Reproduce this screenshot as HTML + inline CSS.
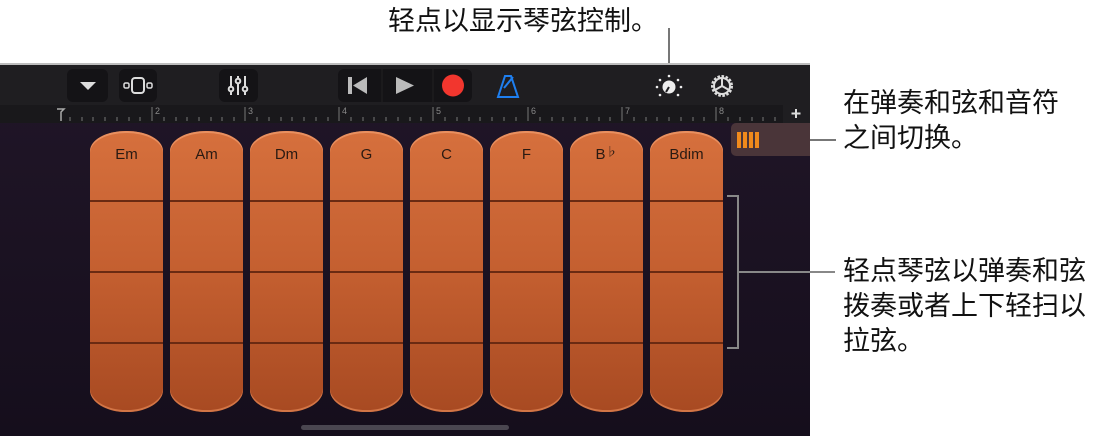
<!DOCTYPE html>
<html><head><meta charset="utf-8"><style>
*{margin:0;padding:0;box-sizing:border-box}
body{width:1107px;height:436px;background:#fff;position:relative;overflow:hidden;font-family:"Liberation Sans","Noto Sans CJK SC",sans-serif}
.cap{position:absolute;font-size:27px;color:#111;line-height:35px;white-space:nowrap;font-family:"Liberation Sans","Noto Sans CJK SC",sans-serif}
.ln{position:absolute;background:#777}
#scr{position:absolute;left:0;top:63px;width:810px;height:373px;background:linear-gradient(#211628,#150e1c);overflow:hidden}
#bar{position:absolute;left:0;top:0;width:810px;height:42px;background:#1f1e21;border-top:2px solid #bdbdbd}
.btn{position:absolute;top:4px;height:33px;background:#141316;border-radius:6px}
#ruler{position:absolute;left:0;top:42px;width:810px;height:18px;background:#19181b}
.col{position:absolute;top:68px;width:73px;height:281px;border-radius:36px 36px 36px 36px/20px 20px 22px 22px;background:linear-gradient(#d6703d,#c45f30 50%,#a84a22);box-shadow:inset 0 2px 0 #e99060,inset 0 -2px 0 #d27546;overflow:hidden}
.col span{position:absolute;top:15px;width:100%;text-align:center;font-size:15px;color:#2a1a12}
.col i{position:absolute;left:0;width:100%;height:2px;background:#6a2a12}
</style></head><body>
<div class="cap" style="left:388px;top:4px">轻点以显示琴弦控制。</div>
<div class="ln" style="left:668px;top:28px;width:2px;height:46px"></div>
<div class="cap" style="left:843px;top:86px">在弹奏和弦和音符<br>之间切换。</div>
<div class="ln" style="left:810px;top:139px;width:26px;height:2px"></div>
<div class="cap" style="left:843px;top:254px">轻点琴弦以弹奏和弦<br>拨奏或者上下轻扫以<br>拉弦。</div>
<div id="scr">
 <div id="bar">
  <div class="btn" style="left:67px;width:41px"><div style="position:absolute;left:13px;top:13px;border-left:8px solid transparent;border-right:8px solid transparent;border-top:8px solid #ddd"></div></div>
  <div class="btn" style="left:119px;width:38px"><svg width="38" height="33"><rect x="13" y="9" width="12" height="15" rx="3" fill="none" stroke="#ddd" stroke-width="2"/><rect x="5" y="14" width="5" height="5" rx="1.5" fill="none" stroke="#ddd" stroke-width="1.5"/><rect x="28" y="14" width="5" height="5" rx="1.5" fill="none" stroke="#ddd" stroke-width="1.5"/></svg></div>
  <div class="btn" style="left:219px;width:39px"><svg width="39" height="33" stroke="#ddd" stroke-width="2" fill="none"><path d="M12 7v19M19 7v19M26 7v19"/><circle cx="12" cy="20" r="2.3" fill="#141316"/><circle cx="19" cy="12" r="2.3" fill="#141316"/><circle cx="26" cy="20" r="2.3" fill="#141316"/></svg></div>
  <div class="btn" style="left:338px;width:134px"><svg width="134" height="33"><rect x="10" y="8" width="4" height="17" fill="#bbb"/><path d="M29 8v17L15 16.5z" fill="#bbb"/><path d="M58 8v17l18-8.5z" fill="#bbb"/><circle cx="115" cy="16.5" r="11" fill="#f2362e"/><path d="M44 0v33M95 0v33" stroke="#222" stroke-width="1"/></svg></div>
  <svg style="position:absolute;left:494px;top:6px" width="28" height="30" fill="none" stroke="#1e7ff0" stroke-width="2"><path d="M4 26h20L17 5h-6z"/><path d="M10 17l9-11"/></svg>
  <svg style="position:absolute;left:654px;top:7px" width="30" height="28"><circle cx="15" cy="15" r="6.5" fill="#eee"/><path d="M15 15l-3 5" stroke="#1f1e21" stroke-width="2"/><g fill="#eee"><circle cx="15" cy="4" r="1.3"/><circle cx="6" cy="8" r="1.3"/><circle cx="24" cy="8" r="1.3"/><circle cx="3" cy="15" r="1.3"/><circle cx="27" cy="15" r="1.3"/><circle cx="6" cy="23" r="1.3"/><circle cx="24" cy="23" r="1.3"/></g></svg>
  <svg style="position:absolute;left:707px;top:6px" width="30" height="30" fill="none" stroke="#ddd" stroke-width="2"><circle cx="15" cy="15" r="9.5" stroke-dasharray="2.5 1.5" stroke-width="3"/><circle cx="15" cy="15" r="8"/><path d="M15 15V7M15 15l-7 4M15 15l7 4"/></svg>
 </div>
 <div id="ruler"><svg width="810" height="18">
  <path d="M57 4h7l-3 3v9" stroke="#aaa" stroke-width="1.5" fill="none"/>
  <g stroke="#777" stroke-width="1">
  <path d="M70 12v4M82 12v4M93 12v4M105 12v4M117 12v4M129 12v4M140 12v4"/>
  <path d="M152 2v14M245 2v14M339 2v14M433 2v14M528 2v14M622 2v14M716 2v14"/>
  <path d="M164 12v4M176 12v4M187 12v4M199 12v4M211 12v4M222 12v4M234 12v4M257 12v4M269 12v4M281 12v4M292 12v4M304 12v4M316 12v4M328 12v4M351 12v4M363 12v4M374 12v4M386 12v4M398 12v4M410 12v4M421 12v4M445 12v4M457 12v4M469 12v4M480 12v4M492 12v4M504 12v4M516 12v4M540 12v4M552 12v4M563 12v4M575 12v4M587 12v4M599 12v4M610 12v4M634 12v4M646 12v4M657 12v4M669 12v4M681 12v4M693 12v4M704 12v4M728 12v4M740 12v4M752 12v4M763 12v4M775 12v4"/></g>
  <g fill="#888" font-size="9" font-family="Liberation Sans"><text x="155" y="9">2</text><text x="248" y="9">3</text><text x="342" y="9">4</text><text x="436" y="9">5</text><text x="531" y="9">6</text><text x="625" y="9">7</text><text x="719" y="9">8</text></g>
  <rect x="783" y="0" width="27" height="18" fill="#1f1e21"/>
  <path d="M796 4v9M791.5 8.5h9" stroke="#ddd" stroke-width="2"/>
 </svg></div>
 <div style="position:absolute;left:731px;top:60px;width:85px;height:33px;background:#4a3539;border-radius:5px"><svg width="40" height="33"><g fill="#f08a1c"><rect x="6" y="9" width="4" height="16"/><rect x="12" y="9" width="4" height="16"/><rect x="18" y="9" width="4" height="16"/><rect x="24" y="9" width="4" height="16"/></g></svg></div>
 <div class="col" style="left:90px"><span>Em</span><i style="top:69px"></i><i style="top:140px"></i><i style="top:211px"></i></div>
 <div class="col" style="left:170px"><span>Am</span><i style="top:69px"></i><i style="top:140px"></i><i style="top:211px"></i></div>
 <div class="col" style="left:250px"><span>Dm</span><i style="top:69px"></i><i style="top:140px"></i><i style="top:211px"></i></div>
 <div class="col" style="left:330px"><span>G</span><i style="top:69px"></i><i style="top:140px"></i><i style="top:211px"></i></div>
 <div class="col" style="left:410px"><span>C</span><i style="top:69px"></i><i style="top:140px"></i><i style="top:211px"></i></div>
 <div class="col" style="left:490px"><span>F</span><i style="top:69px"></i><i style="top:140px"></i><i style="top:211px"></i></div>
 <div class="col" style="left:570px"><span>B<small style="font-size:12px;position:relative;top:-3px">♭</small></span><i style="top:69px"></i><i style="top:140px"></i><i style="top:211px"></i></div>
 <div class="col" style="left:650px"><span>Bdim</span><i style="top:69px"></i><i style="top:140px"></i><i style="top:211px"></i></div>
 <div style="position:absolute;left:301px;top:362px;width:208px;height:5px;border-radius:3px;background:#4a4650"></div>
 <div style="position:absolute;left:727px;top:132px;width:12px;height:154px;border:2px solid #888;border-left:none"></div>
</div>
<div class="ln" style="left:739px;top:271px;width:96px;height:2px;background:#888"></div>
</body></html>
